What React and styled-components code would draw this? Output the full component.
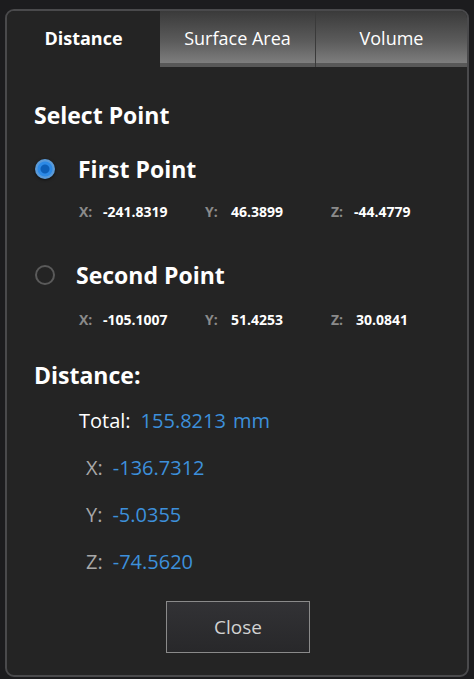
import React from "react";
import styled, { createGlobalStyle } from "styled-components";

const Global = createGlobalStyle`
  html, body { margin: 0; padding: 0; background: #1c1c1e; }
  body { font-family: "Open Sans", "Noto Sans", sans-serif; }
`;

const Page = styled.div`
  width: 474px;
  height: 679px;
  padding: 9px 5px 2px 5px;
  box-sizing: border-box;
  background: #1c1c1e;
`;

const Panel = styled.div`
  height: 100%;
  box-sizing: border-box;
  border: 2px solid #4a4a4c;
  border-radius: 9px;
  background: #242424;
  overflow: hidden;
  display: flex;
  flex-direction: column;
`;

const Tabs = styled.div`
  display: grid;
  grid-template-columns: 153px 155px 1fr;
  height: 56px;
`;

const Tab = styled.div`
  display: flex;
  align-items: center;
  justify-content: center;
  font-size: 18px;
  color: #ffffff;
  font-weight: ${(p) => (p.$active ? 700 : 400)};
  background: ${(p) =>
    p.$active
      ? "#242424"
      : "linear-gradient(#3a3a3a 0%, #5c5c5c 55%, #7d7d7d 92%, #585858 92%, #585858 100%)"};
  border-left: ${(p) => (p.$active || p.$first ? "none" : "1px solid #3a3a3a")};
  padding-bottom: 3px;
  box-sizing: border-box;
`;

const Body = styled.div`
  padding: 33px 0 0 27px;
  display: flex;
  flex-direction: column;
  flex: 1;
`;

const Heading = styled.div`
  font-size: 23px;
  font-weight: 700;
  color: #ffffff;
  line-height: 30px;
  margin-top: ${(p) => p.$mt || 0}px;
`;

const PointRow = styled.div`
  display: flex;
  align-items: center;
  margin-top: ${(p) => p.$mt}px;
  height: 30px;
`;

const Radio = styled.div`
  width: 20px;
  height: 20px;
  border-radius: 50%;
  box-sizing: border-box;
  margin-left: 1px;
  margin-right: ${(p) => p.$gap}px;
  ${(p) =>
    p.$checked
      ? `background: radial-gradient(circle, #0d5fb8 0 4px, #2d8ae6 5px 7px, #5a9ad8 8px 10px);
         box-shadow: 0 1px 3px rgba(0,0,0,0.6);`
      : `border: 2px solid #5a5a5a; background: transparent;`}
`;

const PointLabel = styled.div`
  font-size: 23px;
  font-weight: 700;
  color: #ffffff;
`;

const CoordRow = styled.div`
  display: grid;
  grid-template-columns: 126px 126px 1fr;
  margin: ${(p) => p.$mt}px 0 0 45px;
  font-size: 14px;
  font-weight: 700;
  line-height: 18px;
`;

const Coord = styled.div`
  display: flex;
`;

const CoordKey = styled.span`
  color: #8a8a8a;
  width: ${(p) => p.$w}px;
`;

const CoordVal = styled.span`
  color: #ffffff;
`;

const Results = styled.div`
  display: flex;
  flex-direction: column;
  margin-left: 45px;
  margin-top: 17px;
  gap: 19px;
  font-size: 20px;
  line-height: 28px;
`;

const Line = styled.div`
  display: flex;
  padding-left: ${(p) => p.$indent || 0}px;
`;

const Label = styled.span`
  color: ${(p) => (p.$dim ? "#a8a8a8" : "#ffffff")};
  margin-right: ${(p) => (p.$dim ? 10 : 10)}px;
`;

const Value = styled.span`
  color: #3d90db;
  margin-right: ${(p) => p.$mr || 0}px;
`;

const Footer = styled.div`
  display: flex;
  justify-content: center;
  margin-top: 25px;
  padding-right: 27px;
`;

const Button = styled.button`
  width: 144px;
  height: 52px;
  border: 1px solid #8a8a8a;
  background: linear-gradient(#323235, #28282a);
  color: #d2d2d2;
  font-family: "Open Sans", "Noto Sans", sans-serif;
  font-size: 19px;
  margin-left: 2px;
`;

export default function App() {
  return (
    <>
      <Global />
      <Page>
        <Panel>
          <Tabs>
            <Tab $active>Distance</Tab>
            <Tab $first>Surface Area</Tab>
            <Tab>Volume</Tab>
          </Tabs>
          <Body>
            <Heading>Select Point</Heading>
            <PointRow $mt={24}>
              <Radio $checked $gap={23} />
              <PointLabel>First Point</PointLabel>
            </PointRow>
            <CoordRow $mt={19}>
              <Coord><CoordKey $w={24}>X:</CoordKey><CoordVal>-241.8319</CoordVal></Coord>
              <Coord><CoordKey $w={26}>Y:</CoordKey><CoordVal>46.3899</CoordVal></Coord>
              <Coord><CoordKey $w={23}>Z:</CoordKey><CoordVal>-44.4779</CoordVal></Coord>
            </CoordRow>
            <PointRow $mt={39}>
              <Radio $gap={21} />
              <PointLabel>Second Point</PointLabel>
            </PointRow>
            <CoordRow $mt={21}>
              <Coord><CoordKey $w={24}>X:</CoordKey><CoordVal>-105.1007</CoordVal></Coord>
              <Coord><CoordKey $w={26}>Y:</CoordKey><CoordVal>51.4253</CoordVal></Coord>
              <Coord><CoordKey $w={25}>Z:</CoordKey><CoordVal>30.0841</CoordVal></Coord>
            </CoordRow>
            <Heading $mt={31}>Distance:</Heading>
            <Results>
              <Line>
                <Label>Total:</Label>
                <Value $mr={7}>155.8213</Value>
                <Value>mm</Value>
              </Line>
              <Line $indent={7}><Label $dim>X:</Label><Value>-136.7312</Value></Line>
              <Line $indent={7}><Label $dim>Y:</Label><Value>-5.0355</Value></Line>
              <Line $indent={7}><Label $dim>Z:</Label><Value>-74.5620</Value></Line>
            </Results>
            <Footer>
              <Button>Close</Button>
            </Footer>
          </Body>
        </Panel>
      </Page>
    </>
  );
}
